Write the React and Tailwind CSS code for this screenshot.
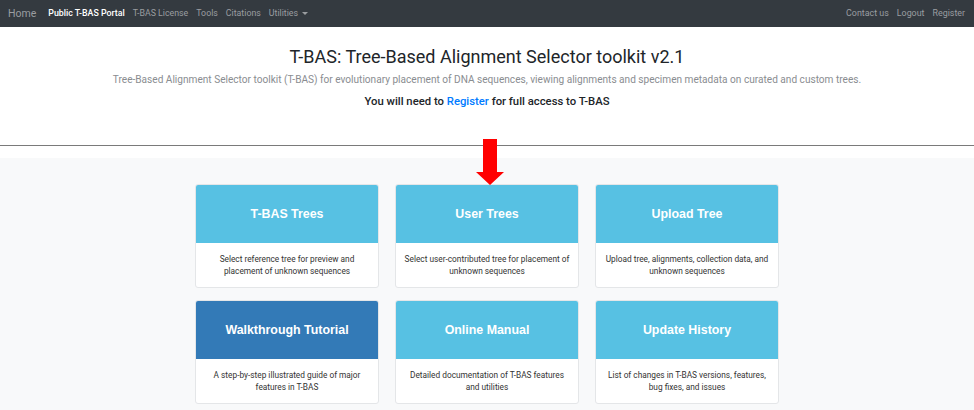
import React from 'react';

const cards = [
  { title: 'T-BAS Trees', lines: ['Select reference tree for preview and', 'placement of unknown sequences'] },
  { title: 'User Trees', lines: ['Select user-contributed tree for placement of', 'unknown sequences'] },
  { title: 'Upload Tree', lines: ['Upload tree, alignments, collection data, and', 'unknown sequences'] },
  { title: 'Walkthrough Tutorial', lines: ['A step-by-step illustrated guide of major', 'features in T-BAS'], dark: true },
  { title: 'Online Manual', lines: ['Detailed documentation of T-BAS features', 'and utilities'] },
  { title: 'Update History', lines: ['List of changes in T-BAS versions, features,', 'bug fixes, and issues'] },
];

function Card({ title, lines, dark }) {
  return (
    <div className="bg-white border border-[#e4e6e8] rounded-[3px] overflow-hidden">
      <div
        className={
          'h-[58px] flex items-center justify-center text-white font-bold text-[12.4px] font-["Liberation_Sans",sans-serif] ' +
          (dark ? 'bg-[#337ab7]' : 'bg-[#57c1e3]')
        }
      >
        {title}
      </div>
      <div className="h-[44px] flex flex-col items-center justify-center text-center whitespace-nowrap text-[8.3px] leading-[12px] text-[#333]">
        {lines.map((l) => (
          <span key={l}>{l}</span>
        ))}
      </div>
    </div>
  );
}

export default function App() {
  return (
    <div className="relative min-h-[410px] bg-[#f8f9fa] font-['Roboto',sans-serif]">
      <nav className="h-[27px] bg-[#343a40] flex items-center justify-between pl-2 pr-[9px]">
        <div className="flex items-center gap-[8px] text-[8.8px] text-[#9a9da0]">
          <span className="text-[10.5px] mr-[4px]">Home</span>
          <span className="text-white font-medium">Public T-BAS Portal</span>
          <span>T-BAS License</span>
          <span>Tools</span>
          <span>Citations</span>
          <span className="flex items-center gap-[4px]">
            Utilities
            <span className="border-x-[3px] border-x-transparent border-t-[3px] border-t-[#9a9da0] w-0 h-0" />
          </span>
        </div>
        <div className="flex items-center gap-[8px] text-[8.9px] text-[#9a9da0]">
          <span>Contact us</span>
          <span>Logout</span>
          <span>Register</span>
        </div>
      </nav>

      <header className="bg-white pt-[19px] text-center">
        <h1 className="text-[18px] leading-[22px] text-[#212529]">
          T-BAS: Tree-Based Alignment Selector toolkit v2.1
        </h1>
        <p className="mt-[5px] text-[10.1px] leading-[13px] text-[#8a8d91]">
          Tree-Based Alignment Selector toolkit (T-BAS) for evolutionary placement of DNA sequences, viewing alignments and specimen metadata on curated and custom trees.
        </p>
        <p className="mt-[8px] text-[11.3px] leading-[15px] font-medium text-[#212529]">
          You will need to <span className="text-[#007bff]">Register</span> for full access to T-BAS
        </p>
        <div className="h-[36px]" />
        <div className="border-t border-[#7a7a7a]" />
        <div className="h-[12px]" />
      </header>

      <section className="pt-[26px] pb-[6px]">
        <div className="w-[584px] mx-auto grid grid-cols-3 gap-x-4 gap-y-[12px]">
          {cards.map((c) => (
            <Card key={c.title} {...c} />
          ))}
        </div>
      </section>

      <svg className="absolute left-[476px] top-[139px]" width="28" height="46" viewBox="0 0 28 46">
        <path d="M7 0 H21 V33 H28 L14 46 L0 33 H7 Z" fill="#ff0000" />
      </svg>
    </div>
  );
}
